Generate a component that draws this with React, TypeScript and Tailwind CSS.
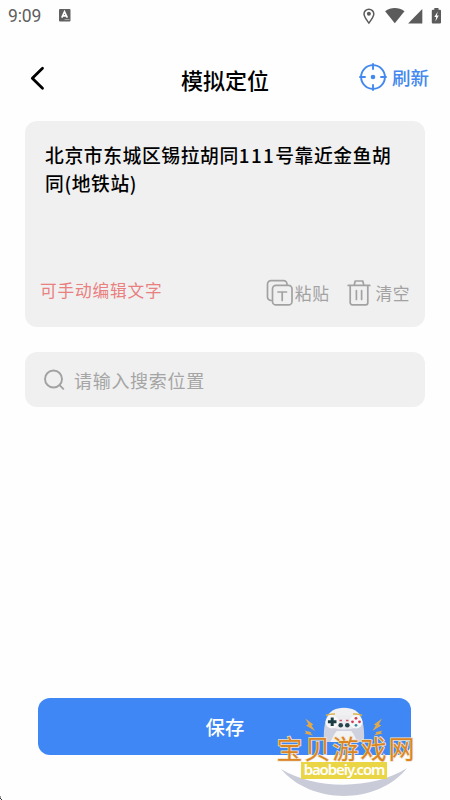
import React, { useState } from 'react'

function StatusBar() {
  return (
    <div className="flex h-8 items-center justify-between pl-2 pr-2 text-[#5f5f5f]">
      <div className="flex items-center">
        <span className="w-[50px] font-['Roboto'] text-[17.5px] leading-8 tracking-[-0.15px]">9:09</span>
        <svg className="-mt-0.5" width="13" height="14" viewBox="0 0 13 14">
          <rect x="1" y="1" width="11.5" height="12.5" rx="1" fill="#606060" />
          <path d="M3.8 9.6 6.5 3.7l2.8 5.9M4.8 7.8h3.5" fill="none" stroke="#fff" strokeWidth="1.7" />
          <path d="M6.5 11.6h5" stroke="#bbb" strokeWidth="0.8" />
        </svg>
      </div>
      <svg width="81" height="20" viewBox="361.5 5 81 20">
        <path d="M369.4 22.1c-2.7-3.6-4.9-6.4-4.9-9a4.9 4.9 0 0 1 9.8 0c0 2.6-2.2 5.4-4.9 9z" fill="none" stroke="#5b5b5b" strokeWidth="1.5" />
        <circle cx="369.4" cy="12.8" r="2" fill="#5b5b5b" />
        <path d="M385.6 10.3c5.8-4.4 13.6-4.4 19.4 0l-9.7 12z" fill="#5b5b5b" />
        <path d="M422.8 8v14.4h-14.2z" fill="#5b5b5b" />
        <path d="M434.8 7h4.2v1.8h1.5a1 1 0 0 1 1 1v11.6a1 1 0 0 1-1 1h-7.2a1 1 0 0 1-1-1V9.8a1 1 0 0 1 1-1h1.5z" fill="#5b5b5b" />
        <path d="M438.3 10.5l-3.5 5.6h1.9l-.8 4.4 3.4-5.9h-2z" fill="#fff" />
      </svg>
    </div>
  )
}

function TargetIcon() {
  return (
    <svg width="28" height="28" viewBox="0 0 28 28" fill="none" stroke="#4288ee" strokeWidth="1.9" strokeLinecap="round">
      <circle cx="14" cy="14" r="11.9" />
      <path d="M14 1v5M14 22v5M1 14h5M22 14h5" />
      <circle cx="14" cy="14" r="2.3" fill="#4288ee" stroke="none" />
    </svg>
  )
}

function PasteIcon() {
  return (
    <svg width="28" height="28" viewBox="0 0 28 28" fill="none" stroke="#a2a2a2" strokeWidth="1.7" strokeLinecap="round" strokeLinejoin="round">
      <path d="M5.5 21.5H5A3.5 3.5 0 0 1 1.5 18V5.2A3.5 3.5 0 0 1 5 1.7h12.5A3.5 3.5 0 0 1 21 5.2v.6" />
      <rect x="6.5" y="6.4" width="19.5" height="19.5" rx="3.5" />
      <path d="M12 13h8.5M16.2 13v8.5" />
    </svg>
  )
}

function TrashIcon() {
  return (
    <svg width="24" height="28" viewBox="0 0 24 28" fill="none" stroke="#a2a2a2" strokeWidth="1.7" strokeLinecap="round" strokeLinejoin="round">
      <path d="M1.2 6.4h21.6M7.2 6.2l1-4.2h7.6l1 4.2M3.2 6.6v17.2a2 2 0 0 0 2 2h13.6a2 2 0 0 0 2-2V6.6" />
      <path d="M9.4 11.5v9M14.6 11.5v9" />
    </svg>
  )
}

function Bolts() {
  return (
    <g fill="#e2a94b">
      <path d="M305.3 718.5l8 6-1.8 1 3.5 5.5-9-5.5 2.4-1.2z" />
      <path d="M304.5 730.5l7 1.7-1 1 2.7 2.3-8.7-2 1.800-1.100z" />
      <path d="M382 718.5l-8 6 1.8 1-3.5 5.5 9-5.5-2.400-1.200z" />
      <path d="M382.500 730.5l-7 1.7 1 1-2.7 2.3 8.7-2-1.800-1.100z" />
    </g>
  )
}

function Controller() {
  return (
    <g>
      <path d="M327 719c1-15 33-15 34 0l1 23h-36z" fill="#f0f0f2" />
      <path d="M326.500 719c-2.500 6-3 14-2.500 23h6c2.500-3 4-9 7-11h14c3 2 4.500 8 7 11h6c.5-9 0-17-2.500-23z" fill="#cfd2de" />
      <path d="M329 715.500h30v11q-15 6-30 0z" fill="#ececf0" />
      <circle cx="332" cy="721.800" r="6.600" fill="#f7f7f8" />
      <circle cx="356" cy="721.800" r="6.600" fill="#f7f7f8" />
      <path d="M326 715.500q3-1.700 9-1.500M353 714q6-.3 9 1.500" fill="none" stroke="#ddb247" strokeWidth="1.500" />
      <path d="M332.200 717.500v8.600M327.900 721.800h8.600" stroke="#193c45" strokeWidth="3" />
      <g fill="#d53b55">
        <circle cx="356" cy="718.300" r="1.400" />
        <circle cx="356" cy="725.300" r="1.400" fill="#368da3" />
        <circle cx="352.500" cy="721.800" r="1.400" />
        <circle cx="359.500" cy="721.800" r="1.400" />
      </g>
      <path d="M339.500 720.500h2.500M346 720.500h2.500" stroke="#d4536b" strokeWidth="1.300" />
      <circle cx="340.700" cy="725.300" r="2.300" fill="#27434b" />
      <circle cx="347.300" cy="725.300" r="2.300" fill="#27434b" />
      <path d="M337 731h14l5 9h-24z" fill="#f3f3f4" />
    </g>
  )
}

function SiteBadge() {
  return (
    <div className="absolute left-[274px] top-[700px] h-[100px] w-[144px]">
      <svg className="absolute inset-0" width="144" height="100" viewBox="274 700 144 100">
        <path d="M281 769c34 21 92 21 126-1-29 37-96 37-126 1z" fill="#c9cbd8" />
        <Bolts />
        <Controller />
      </svg>
      <div className="absolute left-[2.5px] top-[35px] whitespace-nowrap font-['Noto_Sans_CJK_SC',sans-serif] text-[26px] leading-[26px] tracking-[2px] text-[#dc851f] [-webkit-text-stroke:1.500px_#efe2cc] [paint-order:stroke_fill]">
        宝贝游戏网
      </div>
      <div className="absolute left-[27px] top-[62px] flex h-[17px] w-[86px] items-center justify-center bg-[#ead545] font-['Noto_Sans',sans-serif] text-[15px] font-semibold leading-none tracking-[-1.100px] text-white">
        <span className="-mt-0.5">baobeiy.com</span>
      </div>
    </div>
  )
}

export default function App() {
  const [address, setAddress] = useState('北京市东城区锡拉胡同111号靠近金鱼胡同(地铁站)')

  return (
    <div className="relative flex h-[800px] w-[450px] flex-col overflow-hidden bg-[#fefefe] font-['Noto_Sans_CJK_SC',sans-serif]">
      <StatusBar />

      {/* Header */}
      <header className="mt-[22px] flex h-12 items-center pl-[29px] pr-[21px]">
        <button className="flex w-[72px] items-center" aria-label="返回">
          <svg width="18" height="26" viewBox="0 0 18 26" fill="none" stroke="#000" strokeWidth="2.8" strokeLinecap="round" strokeLinejoin="round">
            <path d="M13.5 3.3 3.3 13.300l10.200 10" />
          </svg>
        </button>
        <h1 className="ml-20 mt-0.5 text-[22px] font-medium leading-8 text-black">模拟定位</h1>
        <button className="-mt-[3px] ml-auto flex items-center gap-[5px] text-[18.5px] font-medium leading-7 text-[#4288ee]">
          <TargetIcon />
          <span>刷新</span>
        </button>
      </header>

      {/* Address card */}
      <section className="mx-[25px] mt-[19px] flex h-[206px] flex-col rounded-xl bg-[#f0f0f0]">
        <p className="w-[374px] flex-1 pl-5 pt-5 text-[18.8px] font-medium leading-7 tracking-[0.6px] text-black">
          {address.split(/(\d+)/).map((part, i) => (
            <span key={i} className={/^\d/.test(part) ? 'tracking-[1.4px]' : ''}>{part}</span>
          ))}
        </p>
        <div className="mb-5 flex h-7 items-center pl-[15px] pr-[15px]">
          <span className="-mt-[7px] flex-1 text-[16.7px] leading-7 tracking-[0.8px] text-[#e98080]">可手动编辑文字</span>
          <button className="flex items-center text-[16.8px] leading-7 tracking-[0.5px] text-[#a2a2a2]">
            <PasteIcon />
            <span className="ml-px">粘贴</span>
          </button>
          <button className="ml-[18px] flex items-center gap-1 text-[16.8px] leading-7 tracking-[0.5px] text-[#a2a2a2]" onClick={() => setAddress('')}>
            <TrashIcon />
            <span>清空</span>
          </button>
        </div>
      </section>

      {/* Search */}
      <label className="mx-[25px] mt-[25px] flex h-[55px] items-center rounded-xl bg-[#f0f0f0] pl-[18px]">
        <svg width="24" height="24" viewBox="0 0 24 24" fill="none" stroke="#a2a2a2" strokeWidth="1.9" strokeLinecap="round">
          <circle cx="10.5" cy="11" r="8.5" />
          <path d="m16.8 17.3 3.5 3.5" />
        </svg>
        <input
          className="ml-[7px] flex-1 bg-transparent text-[18px] leading-7 tracking-[0.7px] outline-none placeholder:text-[#a5a5a5]"
          placeholder="请输入搜索位置"
        />
      </label>

      <button className="mb-[45px] ml-[38px] mt-auto h-[57px] w-[373px] rounded-xl bg-[#3e87f4] pl-px pt-px text-[19.4px] font-medium text-white">
        保存
      </button>

      <SiteBadge />
      <svg className="absolute bottom-0 left-0" width="3" height="4">
        <path d="M0 0v2l2 2" fill="none" stroke="#333" strokeWidth="1" />
      </svg>
    </div>
  )
}
